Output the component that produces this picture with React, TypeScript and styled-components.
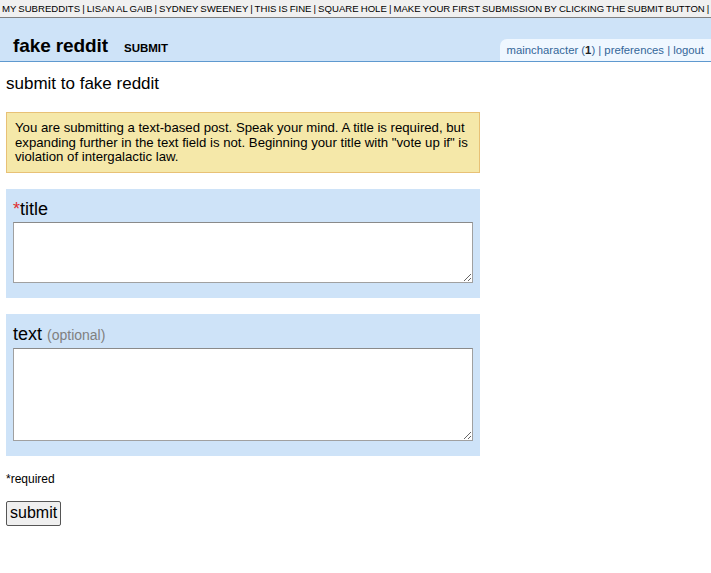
import React from "react";
import styled, { createGlobalStyle } from "styled-components";

const Global = createGlobalStyle`
  html, body { margin: 0; padding: 0; background: #fff; }
  body { font-family: "Liberation Sans", Arial, sans-serif; color: #000; }
`;

const TopBar = styled.div`
  height: 17px;
  background: #f0f0f0;
  border-bottom: 1px solid #808080;
  font-size: 9.6px;
  word-spacing: -0.6px;
  line-height: 17px;
  text-transform: uppercase;
  white-space: nowrap;
  overflow: hidden;
  padding-left: 2px;
  color: #000;
`;

const Header = styled.div`
  height: 43px;
  background: #cee3f8;
  border-bottom: 1px solid #5f99cf;
  display: flex;
  align-items: flex-end;
  justify-content: space-between;
`;

const Brand = styled.div`
  display: flex;
  align-items: baseline;
  padding-left: 13px;
  padding-bottom: 4px;
`;

const Logo = styled.span`
  font-size: 19px;
  font-weight: bold;
  letter-spacing: -0.1px;
`;

const PageName = styled.span`
  font-size: 11.5px;
  font-weight: bold;
  text-transform: uppercase;
  margin-left: 16px;
`;

const UserTab = styled.div`
  background: #eff7ff;
  border-top-left-radius: 7px;
  padding: 3px 7px 3px 7px;
  font-size: 11.3px;
  line-height: 16px;
  color: #336699;
`;

const Karma = styled.b`
  color: #222;
`;

const Content = styled.div`
  padding: 0 6px;
`;

const Heading = styled.h1`
  font-size: 17px;
  font-weight: normal;
  margin: 12px 0 19px 0;
  line-height: 19px;
`;

const InfoBar = styled.div`
  width: 474px;
  box-sizing: border-box;
  background: #f5e8a9;
  border: 1px solid #e8c176;
  padding: 8px 7px 7px 8px;
  font-size: 13.2px;
  line-height: 14.6px;
`;

const Field = styled.div<{ $mt: number }>`
  width: 474px;
  box-sizing: border-box;
  background: #cee3f8;
  margin-top: ${(p) => p.$mt}px;
  padding: 8px 7px 15px 7px;
`;

const Label = styled.div`
  font-size: 18px;
  line-height: 25px;
`;

const Star = styled.span`
  color: #e03030;
`;

const Optional = styled.span`
  color: #808080;
  font-size: 14px;
`;

const Area = styled.textarea<{ $h: number }>`
  display: block;
  width: 460px;
  height: ${(p) => p.$h}px;
  box-sizing: border-box;
  border: 1px solid #a0a0a0;
  border-top-color: #8a8a8a;
  background: #fff;
  margin: 0;
  font-family: "Liberation Sans", Arial, sans-serif;
`;

const Required = styled.div`
  font-size: 12px;
  margin-top: 16px;
  line-height: 14px;
`;

const SubmitButton = styled.button`
  margin-top: 15px;
  font-family: "Liberation Sans", Arial, sans-serif;
  font-size: 16px;
  padding: 2px 3px;
  height: 25px;
  line-height: 18px;
  background: #efefef;
  border: 1px solid #555;
  border-radius: 2px;
  color: #000;
`;

export default function App() {
  return (
    <>
      <Global />
      <TopBar>
        my subreddits | lisan al gaib | sydney sweeney | this is fine | square hole | make your first submission by clicking the submit button |
      </TopBar>
      <Header>
        <Brand>
          <Logo>fake reddit</Logo>
          <PageName>submit</PageName>
        </Brand>
        <UserTab>
          maincharacter (<Karma>1</Karma>) | preferences | logout
        </UserTab>
      </Header>
      <Content>
        <Heading>submit to fake reddit</Heading>
        <InfoBar>
          You are submitting a text-based post. Speak your mind. A title is required, but expanding further in the text field is not. Beginning your title with "vote up if" is violation of intergalactic law.
        </InfoBar>
        <Field $mt={16}>
          <Label>
            <Star>*</Star>title
          </Label>
          <Area $h={61} />
        </Field>
        <Field $mt={16}>
          <Label>
            text <Optional>(optional)</Optional>
          </Label>
          <Area $h={93} />
        </Field>
        <Required>*required</Required>
        <SubmitButton>submit</SubmitButton>
      </Content>
    </>
  );
}
